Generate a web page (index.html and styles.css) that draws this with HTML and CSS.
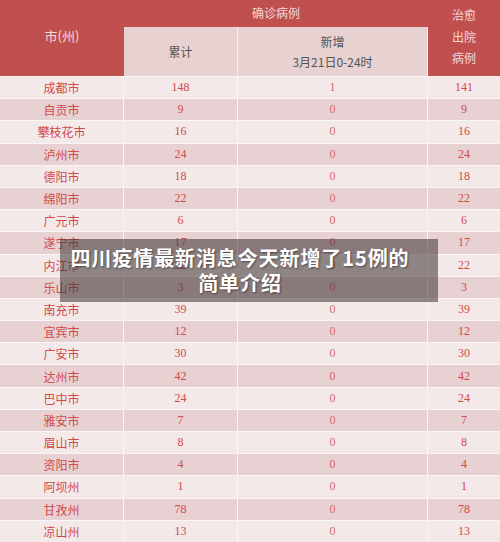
FILE: index.html
```html
<!DOCTYPE html>
<html lang="zh-CN">
<head>
  <meta charset="UTF-8">
  <title>四川疫情最新消息</title>
  <link rel="stylesheet" href="styles.css">
</head>
<body>

<div class="sheet">
  <table class="cases">
    <colgroup>
      <col class="c-city">
      <col class="c-total">
      <col class="c-new">
      <col class="c-cured">
    </colgroup>
    <thead>
      <tr class="head-top">
        <th rowspan="2" class="h-city">市(州)</th>
        <th colspan="2" class="h-group">确诊病例</th>
        <th rowspan="2" class="h-cured">治愈<br>出院<br>病例</th>
      </tr>
      <tr class="head-sub">
        <th class="h-sub">累计</th>
        <th class="h-sub">新增<br><span class="date">3月21日0-24时</span></th>
      </tr>
    </thead>
    <tbody>
      <tr><td>成都市</td><td>148</td><td>1</td><td>141</td></tr>
      <tr><td>自贡市</td><td>9</td><td>0</td><td>9</td></tr>
      <tr><td>攀枝花市</td><td>16</td><td>0</td><td>16</td></tr>
      <tr><td>泸州市</td><td>24</td><td>0</td><td>24</td></tr>
      <tr><td>德阳市</td><td>18</td><td>0</td><td>18</td></tr>
      <tr><td>绵阳市</td><td>22</td><td>0</td><td>22</td></tr>
      <tr><td>广元市</td><td>6</td><td>0</td><td>6</td></tr>
      <tr><td>遂宁市</td><td>17</td><td>0</td><td>17</td></tr>
      <tr><td>内江市</td><td>22</td><td>0</td><td>22</td></tr>
      <tr><td>乐山市</td><td>3</td><td>0</td><td>3</td></tr>
      <tr><td>南充市</td><td>39</td><td>0</td><td>39</td></tr>
      <tr><td>宜宾市</td><td>12</td><td>0</td><td>12</td></tr>
      <tr><td>广安市</td><td>30</td><td>0</td><td>30</td></tr>
      <tr><td>达州市</td><td>42</td><td>0</td><td>42</td></tr>
      <tr><td>巴中市</td><td>24</td><td>0</td><td>24</td></tr>
      <tr><td>雅安市</td><td>7</td><td>0</td><td>7</td></tr>
      <tr><td>眉山市</td><td>8</td><td>0</td><td>8</td></tr>
      <tr><td>资阳市</td><td>4</td><td>0</td><td>4</td></tr>
      <tr><td>阿坝州</td><td>1</td><td>0</td><td>1</td></tr>
      <tr><td>甘孜州</td><td>78</td><td>0</td><td>78</td></tr>
      <tr><td>凉山州</td><td>13</td><td>0</td><td>13</td></tr>
    </tbody>
  </table>

  <div class="caption">四川疫情最新消息今天新增了15例的<br>简单介绍</div>
</div>

</body>
</html>
```

FILE: styles.css
```css
body {
  margin: 0;
  background: #f3e9e9;
  font-family: "Noto Sans CJK SC", "Noto Sans", sans-serif;
  overflow: hidden;
}
.sheet {
  position: relative;
  width: 500px;
  height: 542px;
  overflow: hidden;
}
.cases {
  width: 500px;
  table-layout: fixed;
  border-collapse: separate;
  border-spacing: 0;
  font-size: 12px;
}
.c-city { width: 124px; }
.c-total { width: 114px; }
.c-new { width: 190px; }
.c-cured { width: 72px; }

.cases th {
  font-weight: normal;
  padding: 0;
  text-align: center;
}
.head-top th {
  background: #c0504e;
  color: #f6d9d9;
}
.head-top { height: 27px; }
.head-sub { height: 49px; }
.h-city {
  padding-bottom: 5px !important;
  font-size: 13px;
}
.h-group {
  vertical-align: top;
  line-height: 26px;
}
.h-cured {
  vertical-align: top;
  padding-top: 4px !important;
  line-height: 21.5px;
}
.h-sub {
  background: #e8d1d1;
  color: #555;
  border-right: 1px solid #f6eded;
  line-height: 20px;
}
.h-sub .date { font-size: 12px; }

.cases td {
  height: 21.2px;
  padding: 0;
  text-align: center;
  border-top: 1px solid #fbf6f6;
  border-right: 1px solid #fbf6f6;
  color: #d04a4a;
  line-height: 21px;
  font-family: "Liberation Serif", serif;
}
.cases td:first-child {
  font-family: "Noto Sans CJK SC", sans-serif;
}
.cases td:last-child { border-right: none; }
.cases td:nth-child(3) { color: #d86a6a; }
.cases tbody tr:nth-child(odd) td { background: #f3e9e9; }
.cases tbody tr:nth-child(even) td { background: #e8d1d2; }

.caption {
  position: absolute;
  left: 60px;
  top: 239px;
  width: 378px;
  height: 63px;
  box-sizing: border-box;
  padding: 6px 18px 0 0;
  background: rgba(60, 50, 50, 0.55);
  color: #fff;
  font-weight: bold;
  font-size: 20px;
  letter-spacing: 0.9px;
  line-height: 25px;
  text-align: center;
  text-shadow: 1px 1px 2px rgba(0, 0, 0, 0.45);
}
```
